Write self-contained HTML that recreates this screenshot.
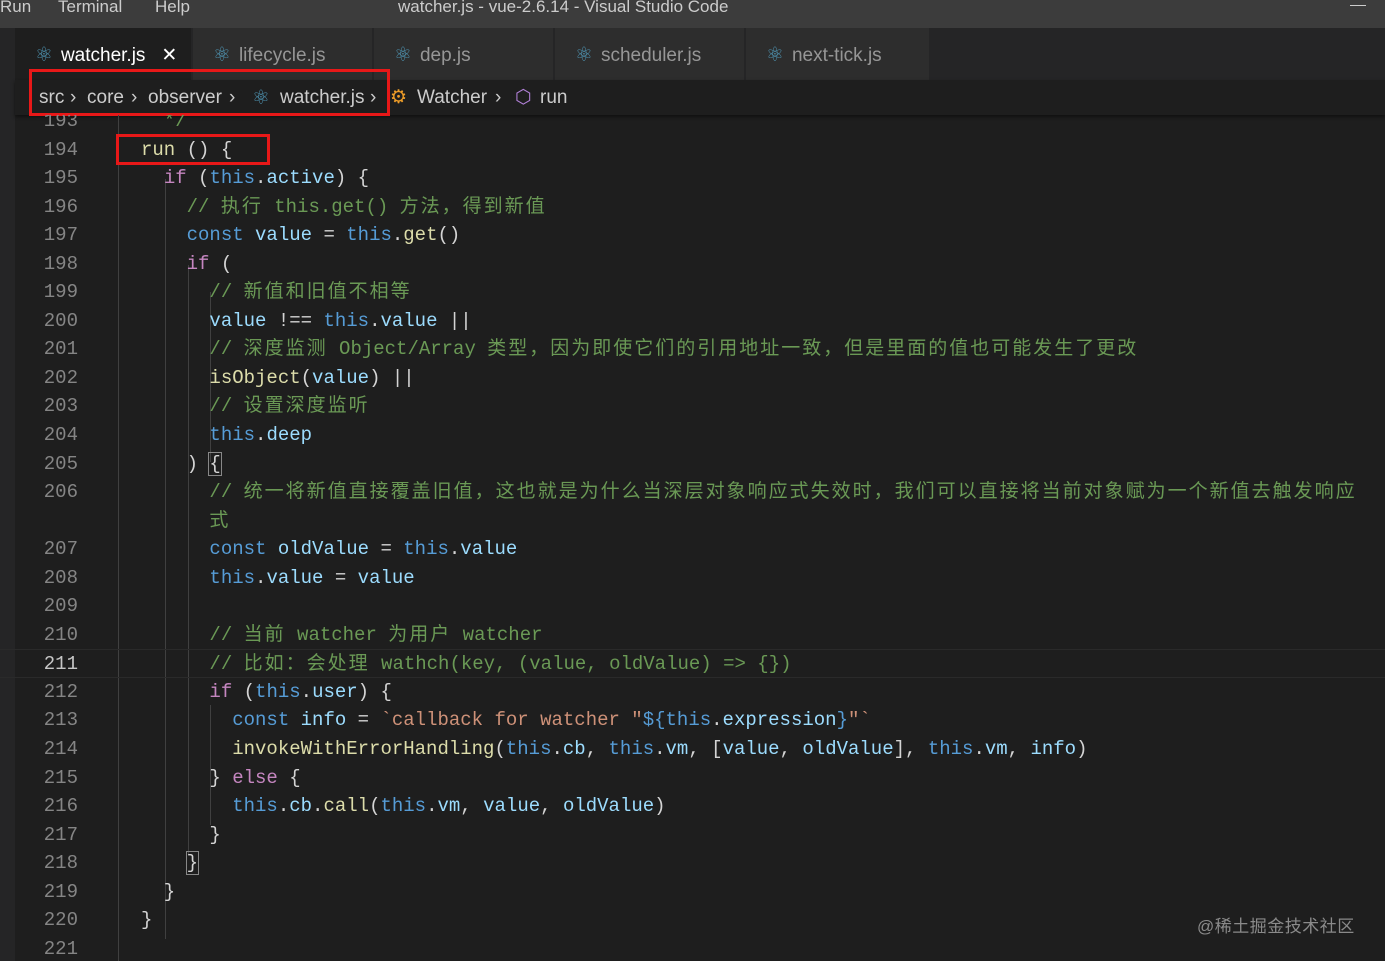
<!DOCTYPE html>
<html><head><meta charset="utf-8"><style>
body{margin:0;width:1385px;height:961px;background:#1e1e1e;overflow:hidden;position:relative;font-family:"Liberation Sans","Noto Sans CJK SC",sans-serif}
#title{position:absolute;left:0;top:0;width:1385px;height:28px;background:#3c3c3c;color:#ccc;font-size:17px}
#title span{position:absolute;top:-3px}
#tabs{position:absolute;left:0;top:28px;width:1385px;height:52px;background:#252526}
.tab{position:absolute;top:0;height:52px;background:#2d2d2d;color:#969696;font-size:19px;line-height:54px;border-right:1px solid #252526;box-sizing:border-box;padding-left:20px}
.tab.act{background:#1e1e1e;color:#fff}
.ic{color:#519aba;font-size:20px;margin-right:8px}
#bc{position:absolute;left:15px;top:80px;width:1370px;height:35px;background:#1e1e1e;color:#ccc;font-size:19px;line-height:36px;box-shadow:0 2px 3px #111}
#bc span{position:absolute;top:0}
#side{position:absolute;left:0;top:28px;width:15px;height:933px;background:#252526}
.row{position:absolute;left:0;height:28.54px;line-height:28.54px;font-family:"Liberation Mono","Noto Sans CJK SC",monospace;font-size:19px;white-space:pre;color:#d4d4d4}
.ln{position:absolute;left:20px;width:58px;text-align:right;color:#858585}
.c{position:absolute;left:141px}
.z{letter-spacing:2px}
.k{color:#569cd6}.v{color:#9cdcfe}.cm{color:#6a9955}.f{color:#dcdcaa}.p{color:#c586c0}.s{color:#ce9178}
.g{position:absolute;width:1px;background:#404040}
.red{position:absolute;border:3px solid #e81818;box-sizing:border-box}
</style></head><body>
<div id="side"></div>
<div id="title"><span style="left:0">Run</span><span style="left:58px">Terminal</span><span style="left:155px">Help</span><span style="left:398px">watcher.js - vue-2.6.14 - Visual Studio Code</span><span style="left:1350px;top:5px;width:16px;height:1px;background:#ccc"></span></div>
<div id="tabs">
<div class="tab act" style="left:15px;width:177px;padding-left:20px"><span class="ic">⚛</span>watcher.js<span style="margin-left:16px">✕</span></div>
<div class="tab" style="left:193px;width:180px"><span class="ic">⚛</span>lifecycle.js</div>
<div class="tab" style="left:374px;width:180px"><span class="ic">⚛</span>dep.js</div>
<div class="tab" style="left:555px;width:190px"><span class="ic">⚛</span>scheduler.js</div>
<div class="tab" style="left:746px;width:184px"><span class="ic">⚛</span>next-tick.js</div>
</div>
<div id="bc"><span style="left:24px">src</span><span style="left:55px">›</span><span style="left:72px">core</span><span style="left:116px">›</span><span style="left:133px">observer</span><span style="left:214px">›</span><span style="left:237px" class="ic">⚛</span><span style="left:265px">watcher.js</span><span style="left:355px">›</span><span style="left:375px;color:#ee9d28">⚙</span><span style="left:402px">Watcher</span><span style="left:480px">›</span><span style="left:500px;color:#b180d7">⬡</span><span style="left:525px">run</span></div>
<div class="red" style="left:29px;top:69px;width:361px;height:47px"></div>
<div style="position:absolute;left:0;top:115px;width:1385px;height:846px;overflow:hidden">
<div class="g" style="left:118px;top:0;height:846px"></div>
<div class="g" style="left:165px;top:64px;height:760px"></div>
<div class="g" style="left:188px;top:150px;height:590px"></div>
<div class="g" style="left:210px;top:590px;height:120px"></div>
<div class="g" style="left:210px;top:177px;height:170px"></div>
</div>
<div style="position:absolute;left:0;top:115px;width:1385px;height:846px;overflow:hidden">
<div style="position:absolute;left:0;top:0;width:1385px;height:846px;transform:translateY(-115px)">
<div class="row" style="top:107px"><span class="ln">193</span><span class="c cm">  */</span></div>
<div class="row" style="top:135.5px"><span class="ln">194</span><span class="c"><span class="f">run</span> () {</span></div>
<div class="row" style="top:164px"><span class="ln">195</span><span class="c">  <span class="p">if</span> (<span class="k">this</span>.<span class="v">active</span>) {</span></div>
<div class="row" style="top:192.6px"><span class="ln">196</span><span class="c cm">    // <span class="z">执行</span> this.get() <span class="z">方法，得到新值</span></span></div>
<div class="row" style="top:221.2px"><span class="ln">197</span><span class="c">    <span class="k">const</span> <span class="v">value</span> = <span class="k">this</span>.<span class="f">get</span>()</span></div>
<div class="row" style="top:249.7px"><span class="ln">198</span><span class="c">    <span class="p">if</span> (</span></div>
<div class="row" style="top:278.2px"><span class="ln">199</span><span class="c cm">      // <span class="z">新值和旧值不相等</span></span></div>
<div class="row" style="top:306.8px"><span class="ln">200</span><span class="c">      <span class="v">value</span> !== <span class="k">this</span>.<span class="v">value</span> ||</span></div>
<div class="row" style="top:335.3px"><span class="ln">201</span><span class="c cm">      // <span class="z">深度监测</span> Object/Array <span class="z">类型，因为即使它们的引用地址一致，但是里面的值也可能发生了更改</span></span></div>
<div class="row" style="top:363.9px"><span class="ln">202</span><span class="c">      <span class="f">isObject</span>(<span class="v">value</span>) ||</span></div>
<div class="row" style="top:392.4px"><span class="ln">203</span><span class="c cm">      // <span class="z">设置深度监听</span></span></div>
<div class="row" style="top:421px"><span class="ln">204</span><span class="c">      <span class="k">this</span>.<span class="v">deep</span></span></div>
<div class="row" style="top:449.5px"><span class="ln">205</span><span class="c">    ) <span style="outline:1px solid #888">{</span></span></div>
<div class="row" style="top:478px"><span class="ln">206</span><span class="c cm">      // <span class="z">统一将新值直接覆盖旧值，这也就是为什么当深层对象响应式失效时，我们可以直接将当前对象赋为一个新值去触发响应</span></span></div>
<div class="row" style="top:506.6px"><span class="c cm">      式</span></div>
<div class="row" style="top:535.1px"><span class="ln">207</span><span class="c">      <span class="k">const</span> <span class="v">oldValue</span> = <span class="k">this</span>.<span class="v">value</span></span></div>
<div class="row" style="top:563.7px"><span class="ln">208</span><span class="c">      <span class="k">this</span>.<span class="v">value</span> = <span class="v">value</span></span></div>
<div class="row" style="top:592.2px"><span class="ln">209</span></div>
<div class="row" style="top:620.8px"><span class="ln">210</span><span class="c cm">      // <span class="z">当前</span> watcher <span class="z">为用户</span> watcher</span></div>
<div class="row" style="top:649.3px;width:1385px;box-sizing:border-box;border-top:1px solid #2a2a2a;border-bottom:1px solid #2a2a2a"><span class="ln" style="color:#c6c6c6">211</span><span class="c cm">      // <span class="z">比如：会处理</span> wathch(key, (value, oldValue) =&gt; {})</span></div>
<div class="row" style="top:677.8px"><span class="ln">212</span><span class="c">      <span class="p">if</span> (<span class="k">this</span>.<span class="v">user</span>) {</span></div>
<div class="row" style="top:706.4px"><span class="ln">213</span><span class="c">        <span class="k">const</span> <span class="v">info</span> = <span class="s">`callback for watcher "</span><span class="k">${this</span>.<span class="v">expression</span><span class="k">}</span><span class="s">"`</span></span></div>
<div class="row" style="top:734.9px"><span class="ln">214</span><span class="c">        <span class="f">invokeWithErrorHandling</span>(<span class="k">this</span>.<span class="v">cb</span>, <span class="k">this</span>.<span class="v">vm</span>, [<span class="v">value</span>, <span class="v">oldValue</span>], <span class="k">this</span>.<span class="v">vm</span>, <span class="v">info</span>)</span></div>
<div class="row" style="top:763.5px"><span class="ln">215</span><span class="c">      } <span class="p">else</span> {</span></div>
<div class="row" style="top:792px"><span class="ln">216</span><span class="c">        <span class="k">this</span>.<span class="v">cb</span>.<span class="f">call</span>(<span class="k">this</span>.<span class="v">vm</span>, <span class="v">value</span>, <span class="v">oldValue</span>)</span></div>
<div class="row" style="top:820.6px"><span class="ln">217</span><span class="c">      }</span></div>
<div class="row" style="top:849.1px"><span class="ln">218</span><span class="c">    <span style="outline:1px solid #888">}</span></span></div>
<div class="row" style="top:877.7px"><span class="ln">219</span><span class="c">  }</span></div>
<div class="row" style="top:906.2px"><span class="ln">220</span><span class="c">}</span></div>
<div class="row" style="top:934.8px"><span class="ln">221</span></div>
</div></div>
<div class="red" style="left:116px;top:134px;width:154px;height:31px"></div>
<div style="position:absolute;left:1197px;top:912px;color:#8a8a8a;font-size:17px;letter-spacing:0.5px">@稀土掘金技术社区</div>
</body></html>
